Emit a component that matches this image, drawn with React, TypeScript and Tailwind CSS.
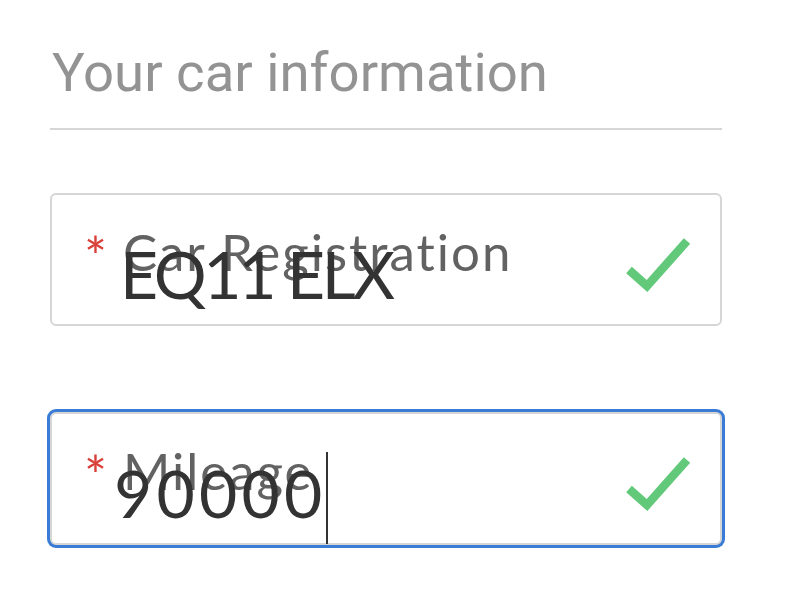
import React from "react";

function Check() {
  return (
    <svg width="76" height="60" viewBox="0 0 76 60" className="absolute left-[568px] top-[38px]">
      <path d="M9 37 L27 53 L67 8" fill="none" stroke="#62c87a" strokeWidth="8.5" />
    </svg>
  );
}

function Field({
  label,
  value,
  focused,
  valueClass,
}: {
  label: string;
  value: string;
  focused?: boolean;
  valueClass: string;
}) {
  return (
    <div
      className={
        "relative h-[133px] rounded-[6px] border-2 border-[#d6d6d6] bg-white " +
        (focused ? "ring-[3px] ring-[#3a7bd5]" : "")
      }
    >
      <div className="absolute left-[32px] top-[31px] flex items-start gap-[16px] font-['Lato'] text-[#626262]">
        <span className="mt-[3px] text-[54px] leading-none text-[#d9403a]">*</span>
        <span className="text-[51px] leading-none tracking-[2px]">{label}</span>
      </div>
      <div className={"pt-[46px] font-['Lato'] text-[66px] leading-none text-[#333] " + valueClass}>
        <span className="relative inline-block">
          {value}
          {focused && <span className="absolute right-[-2px] top-[-8px] h-[92px] w-[2px] bg-[#333]" />}
        </span>
      </div>
      <Check />
    </div>
  );
}

export default function App() {
  return (
    <div className="min-h-screen bg-white px-[50px] pt-[45px]">
      <h1 className="pl-[2px] font-['Roboto'] text-[54.5px] font-normal leading-none text-[#939393]">
        Your car information
      </h1>
      <div className="mt-[28px] h-[2px] w-[672px] bg-[#d6d6d6]" />
      <div className="mt-[63px] flex w-[672px] flex-col gap-[86px]">
        <Field label="Car Registration" value="EQ11 ELX" valueClass="pl-[68px] tracking-[-3.3px]" />
        <Field label="Mileage" value="90000" valueClass="pl-[62px] tracking-[4.2px]" focused />
      </div>
    </div>
  );
}
